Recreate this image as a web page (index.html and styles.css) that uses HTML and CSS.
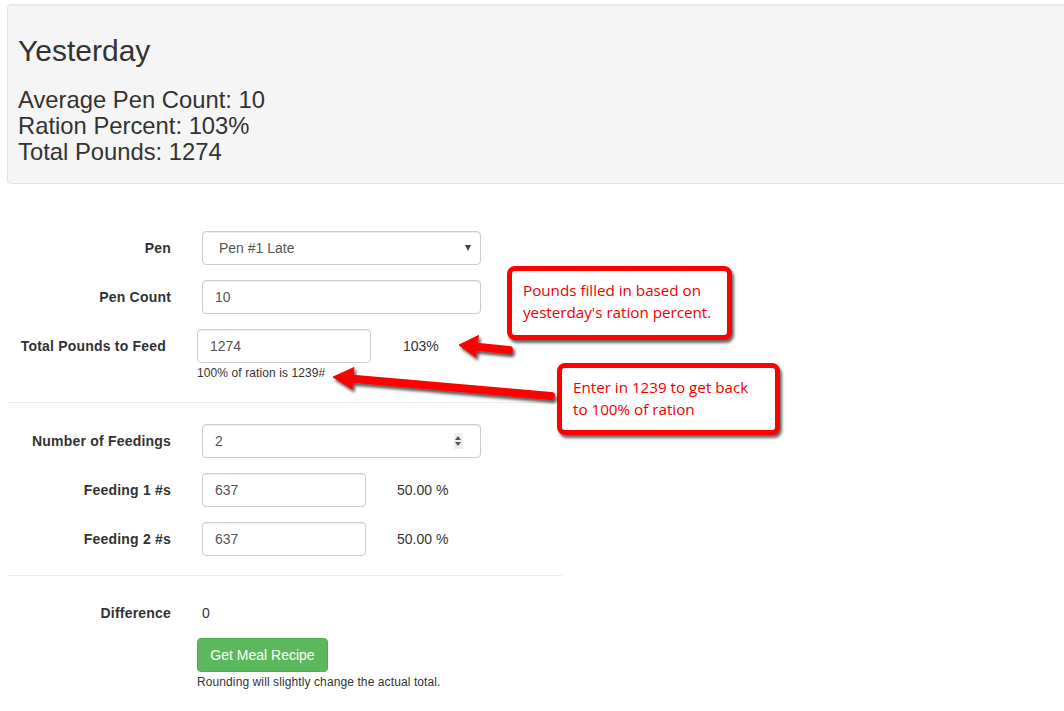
FILE: index.html
```html
<!DOCTYPE html>
<html lang="en">
<head>
  <meta charset="utf-8" />
  <title>Feeding</title>
  <meta name="viewport" content="width=device-width, initial-scale=1" />
  <link rel="stylesheet" href="styles.css">
</head>

<body>
  <div class="well">
    <h2 class="well-title">Yesterday</h2>
    <div class="stats">
      Average Pen Count: 10<br>
      Ration Percent: 103%<br>
      Total Pounds: 1274
    </div>
  </div>

  <form class="feed-form">
    <div class="form-row">
      <label class="row-label">Pen</label>
      <div class="select-wrap">
        <select class="field field-select">
          <option>Pen #1 Late</option>
        </select>
        <span class="caret"></span>
      </div>
    </div>

    <div class="form-row">
      <label class="row-label">Pen Count</label>
      <input type="text" class="field field-wide" value="10" />
    </div>

    <div class="form-row form-row-tight">
      <label class="row-label row-label-short">Total Pounds to Feed</label>
      <input type="text" class="field field-mid" value="1274" />
      <span class="row-note row-note-pct">103%</span>
    </div>
    <p class="help-text">100% of ration is 1239#</p>

    <hr class="divider divider-first" />

    <div class="form-row">
      <label class="row-label">Number of Feedings</label>
      <div class="select-wrap">
        <input type="text" class="field field-wide" value="2" />
        <span class="spinner"><i class="spin-up"></i><i class="spin-down"></i></span>
      </div>
    </div>

    <div class="form-row">
      <label class="row-label">Feeding 1 #s</label>
      <input type="text" class="field field-short" value="637" />
      <span class="row-note">50.00 %</span>
    </div>

    <div class="form-row">
      <label class="row-label">Feeding 2 #s</label>
      <input type="text" class="field field-short" value="637" />
      <span class="row-note">50.00 %</span>
    </div>

    <hr class="divider divider-second" />

    <div class="form-row form-row-static">
      <label class="row-label">Difference</label>
      <span class="static-value">0</span>
    </div>

    <button type="button" class="btn-recipe">Get Meal Recipe</button>
    <p class="help-text help-text-last">Rounding will slightly change the actual total.</p>
  </form>

  <!-- annotations drawn over the screenshot -->
  <div class="callout callout-pounds">Pounds filled in based on<br>yesterday's ration percent.</div>
  <div class="callout callout-enter">Enter in 1239 to get back<br>to 100% of ration</div>

  <svg class="arrows" width="1064" height="711" viewBox="0 0 1064 711">
    <defs>
      <filter id="shade" x="-20%" y="-50%" width="140%" height="200%">
        <feDropShadow dx="2" dy="3" stdDeviation="1.6" flood-color="#000" flood-opacity="0.65" />
      </filter>
    </defs>
    <g filter="url(#shade)" fill="#f00" stroke="#f00">
      <line x1="509" y1="350" x2="474" y2="346.6" stroke-width="8" stroke-linecap="round" />
      <polygon points="459,345 478.5,335.5 475.5,357" stroke-width="1" stroke-linejoin="round" />
      <line x1="551" y1="396" x2="350" y2="378.6" stroke-width="8" stroke-linecap="round" />
      <polygon points="333,377 354,367.5 352,389" stroke-width="1" stroke-linejoin="round" />
    </g>
  </svg>
</body>
</html>
```

FILE: styles.css
```css
* {
  box-sizing: border-box;
}

body {
  margin: 0;
  overflow: hidden;
  font-family: "Liberation Sans", Arial, Helvetica, sans-serif;
  font-size: 14px;
  line-height: 20px;
  color: #333;
  background-color: #fff;
}

.well {
  margin: 4px 0 0 7px;
  width: 1090px;
  padding: 29px 10px 18px 10px;
  background-color: #f5f5f5;
  border: 1px solid #e3e3e3;
  border-radius: 4px;
  box-shadow: inset 0 1px 1px rgba(0, 0, 0, 0.05);
}

.well-title {
  margin: 0 0 20px 0;
  font-size: 30px;
  line-height: 33px;
  font-weight: 400;
}

.stats {
  font-size: 23.8px;
  line-height: 26px;
}

.feed-form {
  margin: 47px 0 0 7px;
  width: 555px;
}

.form-row {
  display: flex;
  align-items: center;
  margin-bottom: 15px;
}

.row-label {
  width: 164px;
  margin-right: 31px;
  text-align: right;
  font-weight: 700;
  letter-spacing: 0.2px;
}

.row-label-short {
  width: 159px;
}

.field {
  height: 34px;
  padding: 6px 12px;
  font-family: inherit;
  font-size: 14px;
  color: #555;
  background-color: #fff;
  border: 1px solid #ccc;
  border-radius: 4px;
  box-shadow: inset 0 1px 1px rgba(0, 0, 0, 0.075);
  outline: none;
}

.field-wide {
  width: 279px;
}

.field-mid {
  width: 174px;
}

.field-short {
  width: 164px;
}

.field-select {
  width: 279px;
  padding-left: 16px;
  appearance: none;
  -webkit-appearance: none;
}

.select-wrap {
  position: relative;
}

.caret {
  position: absolute;
  right: 10px;
  top: 14px;
  width: 0;
  height: 0;
  border-left: 3px solid transparent;
  border-right: 3px solid transparent;
  border-top: 6px solid #444;
}

.spinner {
  position: absolute;
  right: 18px;
  top: 9px;
  width: 9px;
  height: 16px;
  background-color: #efefef;
}

.spin-up,
.spin-down {
  position: absolute;
  left: 1px;
  width: 0;
  height: 0;
  border-left: 3.5px solid transparent;
  border-right: 3.5px solid transparent;
}

.spin-up {
  top: 3px;
  border-bottom: 4px solid #555;
}

.spin-down {
  top: 9px;
  border-top: 4px solid #555;
}

.row-note {
  margin-left: 31px;
}

.row-note-pct {
  margin-left: 32px;
}

.form-row-tight {
  margin-bottom: 0;
}

.help-text {
  margin: 2px 0 0 190px;
  font-size: 12px;
  line-height: 17px;
  letter-spacing: 0.1px;
}

.divider {
  margin: 20px 0 21px 0;
  border: 0;
  border-top: 1px solid #eee;
}

.divider-second {
  margin-top: 19px;
  margin-bottom: 27px;
}

.form-row-static {
  margin-bottom: 15px;
}

.static-value {
  line-height: 20px;
}

.btn-recipe {
  display: block;
  margin-left: 190px;
  width: 131px;
  height: 34px;
  padding: 6px 10px;
  font-family: inherit;
  font-size: 14px;
  line-height: 20px;
  color: #fff;
  background-color: #5cb85c;
  border: 1px solid #4cae4c;
  border-radius: 4px;
  cursor: pointer;
}

.help-text-last {
  margin-top: 2px;
}

/* annotations */
.callout {
  position: absolute;
  padding: 8px 0 0 11px;
  font-family: "Open Sans", "Noto Sans", sans-serif;
  font-size: 15.2px;
  line-height: 22px;
  color: #ee0000;
  background-color: #fff;
  border: 5px solid #f00;
  border-radius: 8px;
  box-shadow: 2px 3px 3px rgba(0, 0, 0, 0.6);
}

.callout-pounds {
  left: 507px;
  top: 266px;
  width: 225px;
  height: 74px;
}

.callout-enter {
  left: 557px;
  top: 363px;
  width: 223px;
  height: 72px;
}

.arrows {
  position: absolute;
  left: 0;
  top: 0;
  pointer-events: none;
}
```
